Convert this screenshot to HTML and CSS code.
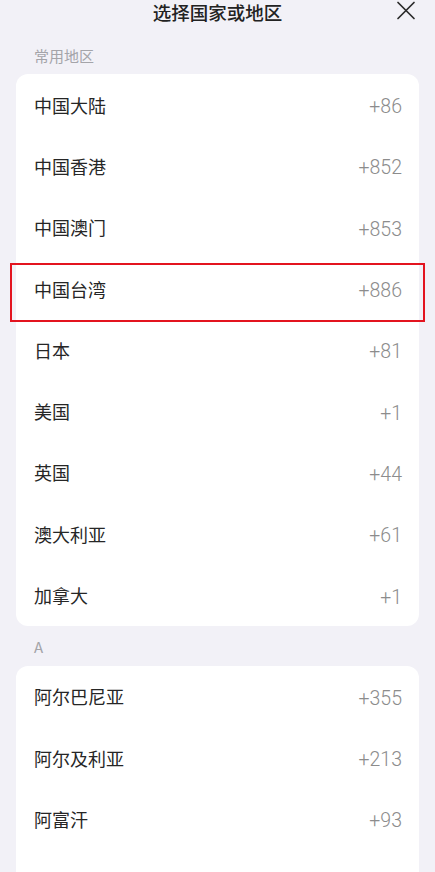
FILE: index.html
```html
<!DOCTYPE html>
<html lang="zh-CN">
<head>
<meta charset="utf-8">
<title>选择国家或地区</title>
<link rel="stylesheet" href="styles.css">
</head>
<body>
<div class="page">
  <header class="topbar">
    <h1 class="title">选择国家或地区</h1>
    <button class="close" aria-label="关闭">
      <svg width="20" height="20" viewBox="0 0 20 20"><path d="M2 1.5 L18 17.5 M18 1.5 L2 17.5" stroke="#2a2a2a" stroke-width="1.7" fill="none" stroke-linecap="round"/></svg>
    </button>
  </header>

  <div class="group-label first">常用地区</div>
  <ul class="card">
    <li class="row"><span class="name">中国大陆</span><span class="code">+86</span></li>
    <li class="row"><span class="name">中国香港</span><span class="code">+852</span></li>
    <li class="row"><span class="name">中国澳门</span><span class="code">+853</span></li>
    <li class="row selected"><span class="name">中国台湾</span><span class="code">+886</span></li>
    <li class="row"><span class="name">日本</span><span class="code">+81</span></li>
    <li class="row"><span class="name">美国</span><span class="code">+1</span></li>
    <li class="row"><span class="name">英国</span><span class="code">+44</span></li>
    <li class="row"><span class="name">澳大利亚</span><span class="code">+61</span></li>
    <li class="row"><span class="name">加拿大</span><span class="code">+1</span></li>
  </ul>

  <div class="group-label">A</div>
  <ul class="card open-end">
    <li class="row"><span class="name">阿尔巴尼亚</span><span class="code">+355</span></li>
    <li class="row"><span class="name">阿尔及利亚</span><span class="code">+213</span></li>
    <li class="row"><span class="name">阿富汗</span><span class="code">+93</span></li>
  </ul>
</div>
</body>
</html>
```

FILE: styles.css
```css
* { box-sizing: border-box; }

html, body {
  margin: 0;
  padding: 0;
  background: #f2f1f7;
  height: 100%;
  overflow: hidden;
}

body {
  font-family: "Noto Sans CJK SC", "Noto Sans", sans-serif;
  color: #222;
}

.page {
  display: flex;
  flex-direction: column;
}

.topbar {
  position: relative;
  height: 26px;
  display: flex;
  align-items: center;
  justify-content: center;
}

.title {
  margin: 0;
  font-size: 18.5px;
  font-weight: 500;
  line-height: 24px;
  color: #222;
  transform: translateY(-1px);
}

.close {
  position: absolute;
  right: 19px;
  top: 1px;
  width: 20px;
  height: 20px;
  padding: 0;
  border: 0;
  background: none;
  display: flex;
}

.group-label {
  padding: 11px 34px 9px;
  line-height: 20px;
  font-size: 15px;
  color: #a4a4a9;
}

.group-label.first {
  padding-top: 20px;
  padding-bottom: 8px;
}

.card {
  list-style: none;
  margin: 0 16px;
  padding: 0;
  background: #fff;
  border-radius: 12px;
}

/* the list continues below the fold */
.card.open-end {
  padding-bottom: 40px;
}

.row {
  position: relative;
  height: 61.3px;
  display: flex;
  align-items: center;
  justify-content: space-between;
  padding: 0 17px 0 18px;
}

.name {
  font-size: 18px;
  color: #262626;
}

.code {
  font-family: Roboto, "Noto Sans", sans-serif;
  font-size: 19.5px;
  font-weight: 300;
  color: #8c8c8c;
  transform: translateY(2px);
}

/* highlight frame around the chosen region */
.row.selected::after {
  content: "";
  position: absolute;
  left: -6px;
  right: -6px;
  top: 5px;
  bottom: -3px;
  border: 2.5px solid #e3141f;
  pointer-events: none;
}
```
